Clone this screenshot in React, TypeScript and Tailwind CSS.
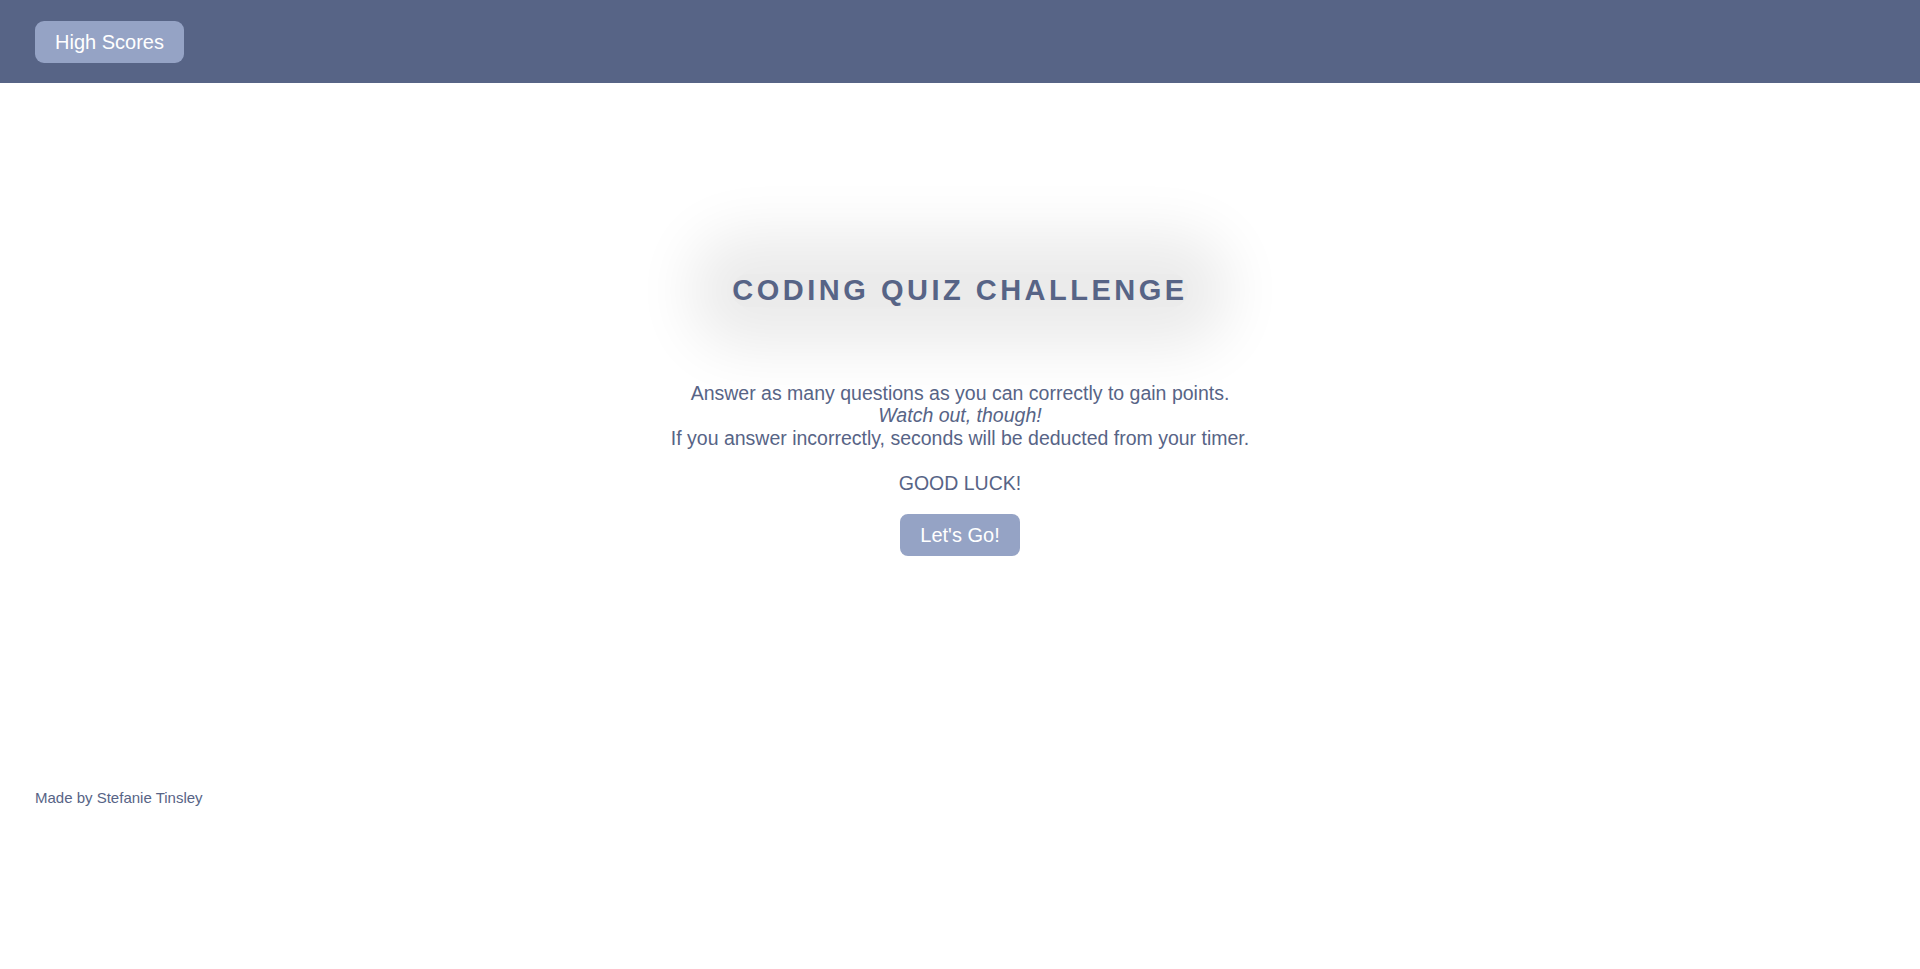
export default function App() {
  return (
    <div className="min-h-screen bg-white font-['Liberation_Sans',Arial,sans-serif] text-[#576486]">
      {/* Header */}
      <header className="h-[83px] bg-[#576486] flex items-center px-[35px]">
        <button className="bg-[#95a3c5] text-white text-[20px] leading-[24px] px-[20px] py-[9px] rounded-[9px]">
          High Scores
        </button>
      </header>

      <main className="flex flex-col items-center pt-[191px] text-center">
        {/* soft grey glow behind the title */}
        <h1 className="text-[29px] leading-[33px] font-bold tracking-[3.5px] bg-[#ebebeb] shadow-[0_0_60px_40px_#ebebeb] rounded-[16px]">
          CODING QUIZ CHALLENGE
        </h1>

        <p className="mt-[75px] text-[19.5px] leading-[22.4px]">
          Answer as many questions as you can correctly to gain points.
          <br />
          <em>Watch out, though!</em>
          <br />
          If you answer incorrectly, seconds will be deducted from your timer.
          <br />
          <br />
          GOOD LUCK!
        </p>

        <button className="mt-[20px] bg-[#95a3c5] text-white text-[20px] leading-[24px] px-[20px] py-[9px] rounded-[8px]">
          Let's Go!
        </button>
      </main>

      <footer className="mt-[233px] px-[35px] text-[15px] leading-[17px]">
        Made by Stefanie Tinsley
      </footer>
    </div>
  );
}
